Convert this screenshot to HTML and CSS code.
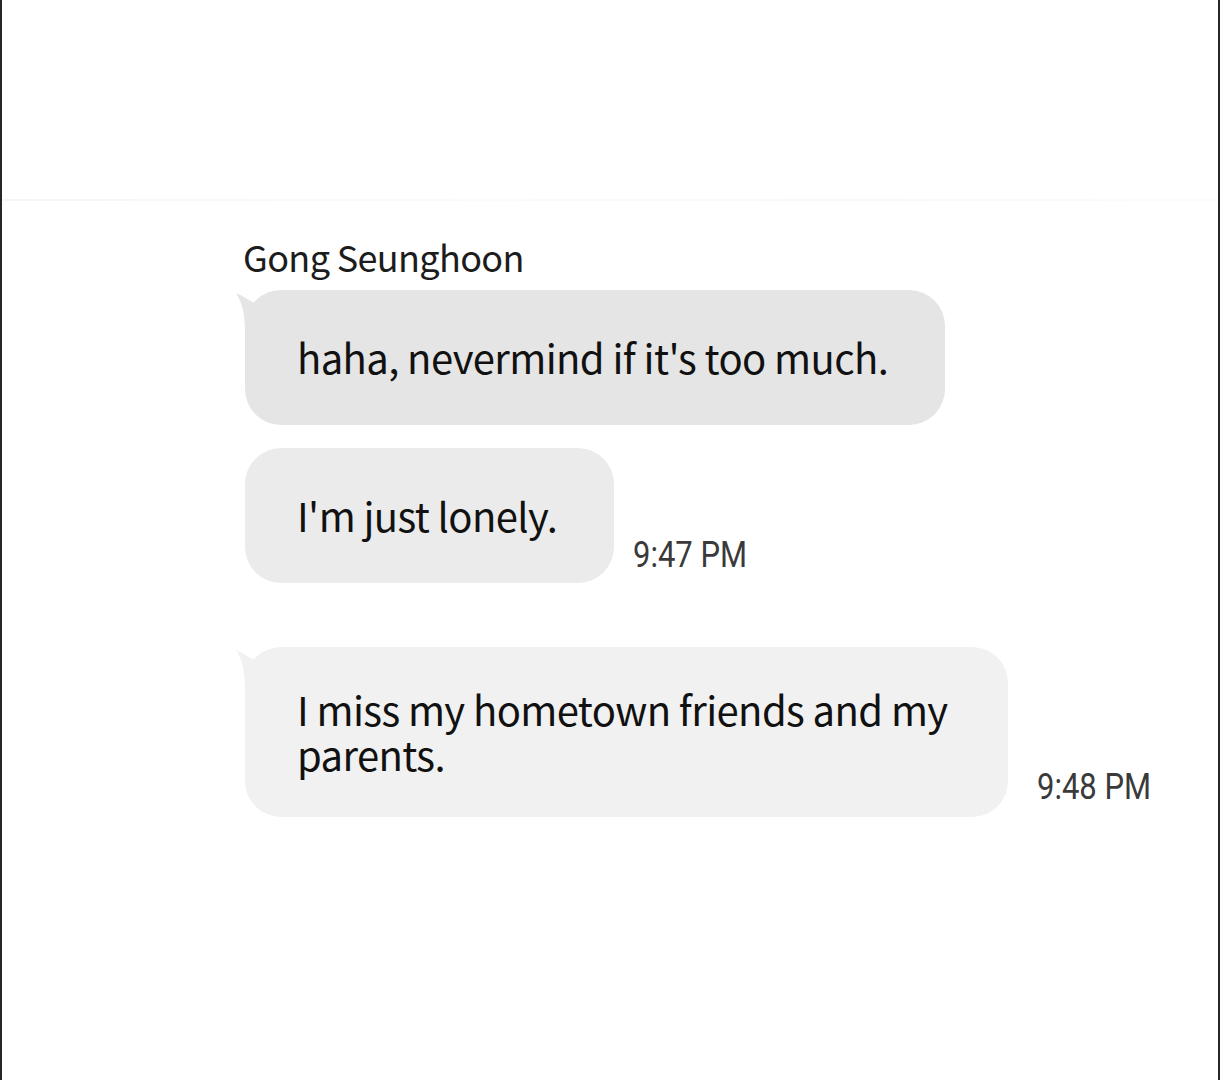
FILE: index.html
```html
<!DOCTYPE html>
<html lang="en">
<head>
    <meta charset="UTF-8">
    <meta name="viewport" content="width=device-width, initial-scale=1.0">
    <title>Gong Seunghoon</title>
    <link rel="stylesheet" href="styles.css">
</head>
<body>
    <div class="frame">
        <div class="divider"></div>

        <section class="chat">
            <div class="sender">Gong Seunghoon</div>

            <!-- first group -->
            <div class="row">
                <div class="bubble bubble-dark">
                    <svg class="tail" width="24" height="44" viewBox="0 0 24 44"><path d="M0 3 C8 6 14 12 24 15 L24 44 L9 44 C9 24 6 12 0 3 Z" fill="#e5e5e5"/></svg>
                    haha, nevermind if it's too much.
                </div>
            </div>
            <div class="row">
                <div class="bubble bubble-mid">I'm just lonely.</div>
                <span class="time">9:47 PM</span>
            </div>

            <!-- second group -->
            <div class="row row-group">
                <div class="bubble bubble-light bubble-wide">
                    <svg class="tail" width="24" height="44" viewBox="0 0 24 44"><path d="M0 3 C8 6 14 12 24 15 L24 44 L9 44 C9 24 6 12 0 3 Z" fill="#f1f1f1"/></svg>
                    I miss my hometown friends and my parents.
                </div>
                <span class="time time-far">9:48 PM</span>
            </div>
        </section>
    </div>
</body>
</html>
```

FILE: styles.css
```css
body {
    margin: 0;
    background: #fff;
}
.frame {
    height: 1080px;
    box-sizing: border-box;
    border-left: 2px solid #262626;
    border-right: 2px solid #262626;
    background: #fff;
    overflow: hidden;
}
.divider {
    height: 2px;
    margin-top: 199px;
    background: linear-gradient(90deg, #f6f6f6, #fbfbfb 40%, #f8f8f8 70%, #fcfcfc);
}
.chat {
    padding-left: 241px;
    padding-top: 27px;
}
.sender {
    font-family: "Noto Sans CJK KR", "Noto Sans", sans-serif;
    font-size: 36px;
    line-height: 56px;
    letter-spacing: -0.65px;
    color: #1c1c1c;
    margin-bottom: 6px;
}
.row {
    display: flex;
    align-items: flex-end;
    margin-bottom: 23px;
}
.row-group {
    margin-top: 64px;
}
.bubble {
    position: relative;
    box-sizing: border-box;
    min-height: 135px;
    display: flex;
    align-items: center;
    padding: 40px 57px 40px 52px;
    border-radius: 36px;
    font-family: "Noto Sans CJK KR", "Noto Sans", sans-serif;
    font-size: 40px;
    line-height: 45px;
    letter-spacing: -0.6px;
    color: #111;
    margin-left: 2px;
}
.bubble-dark {
    background: #e5e5e5;
}
.bubble-mid {
    background: #ebebeb;
}
.bubble-light {
    background: #f1f1f1;
}
.bubble-wide {
    width: 763px;
    min-height: 170px;
    padding-right: 30px;
}
.tail {
    position: absolute;
    left: -9px;
    top: 0;
}
.time {
    display: inline-block;
    font-family: Roboto, "Liberation Sans", sans-serif;
    font-size: 36px;
    line-height: 42px;
    color: #3a3a3a;
    margin-left: 19px;
    margin-bottom: 7px;
    transform: scaleX(0.86);
    transform-origin: left bottom;
}
.time-far {
    margin-left: 29px;
    margin-bottom: 9px;
}
```
